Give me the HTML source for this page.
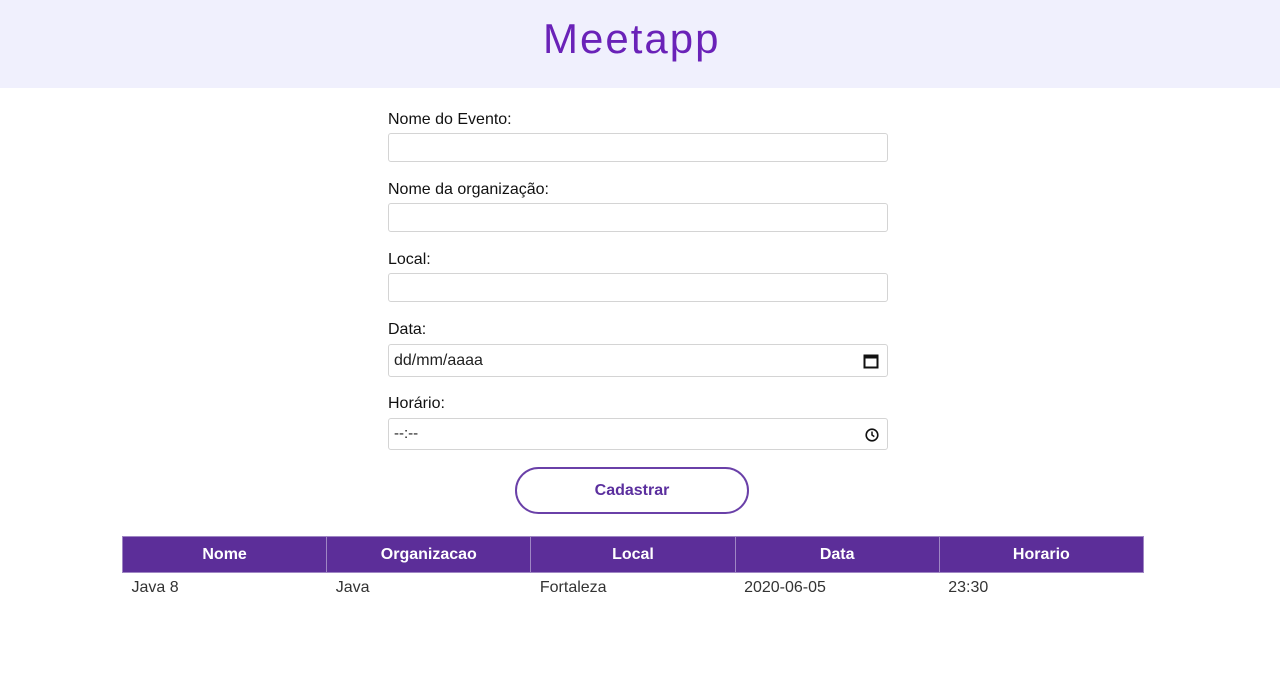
<!DOCTYPE html>
<html><head><meta charset="utf-8"><style>
*{box-sizing:border-box;margin:0;padding:0}
body{width:1280px;height:683px;background:#fff;font-family:"Liberation Sans",Arial,sans-serif;position:relative;overflow:hidden}
.hdr{position:absolute;left:0;top:0;width:1280px;height:88px;background:#f0f0fd}
.logo{position:absolute;left:543px;top:15px;font-size:42px;color:#6a22b8;letter-spacing:2px;font-weight:normal}
.lbl{position:absolute;left:388px;font-size:16px;color:#111}
.inp{position:absolute;left:388px;width:500px;border:1px solid #d4d4d4;border-radius:3px;background:#fff;font-size:16px;color:#222;padding-left:5px}
.btn{position:absolute;left:515px;top:467px;width:234px;height:47px;border:2px solid #6a40a8;border-radius:24px;color:#5b2f9e;font-weight:bold;font-size:16px;text-align:center;line-height:43px}
table{position:absolute;left:122px;top:536px;width:1022px;border-collapse:collapse;table-layout:fixed}
th{background:#5c2e99;color:#fff;font-size:16px;height:36px;border:1px solid #9f86c4}
td{font-size:16px;color:#333;padding:6px 9px;height:28px}
</style></head><body>
<div class="hdr"><div class="logo">Meetapp</div></div>
<div class="lbl" style="top:111px">Nome do Evento:</div>
<div class="inp" style="top:133px;height:29px"></div>
<div class="lbl" style="top:181px">Nome da organização:</div>
<div class="inp" style="top:203px;height:29px"></div>
<div class="lbl" style="top:251px">Local:</div>
<div class="inp" style="top:273px;height:29px"></div>
<div class="lbl" style="top:321px">Data:</div>
<div class="inp" style="top:344px;height:33px;line-height:31px">dd/mm/aaaa
<svg style="position:absolute;right:8px;top:8px" width="16" height="16" viewBox="0 0 16 16"><rect x="1.5" y="2.5" width="13" height="12" fill="none" stroke="#111" stroke-width="2"/><rect x="1.5" y="2.5" width="13" height="3" fill="#111"/></svg></div>
<div class="lbl" style="top:395px">Horário:</div>
<div class="inp" style="top:418px;height:32px;line-height:30px;font-size:15px">--:--
<svg style="position:absolute;right:8px;top:9px" width="14" height="14" viewBox="0 0 14 14"><circle cx="7" cy="7" r="5.8" fill="none" stroke="#111" stroke-width="1.6"/><path d="M7 3.5V7l2.3 1.6" fill="none" stroke="#111" stroke-width="1.5"/></svg></div>
<div class="btn">Cadastrar</div>
<table><tr><th>Nome</th><th>Organizacao</th><th>Local</th><th>Data</th><th>Horario</th></tr>
<tr><td>Java 8</td><td>Java</td><td>Fortaleza</td><td>2020-06-05</td><td>23:30</td></tr></table>
</body></html>
